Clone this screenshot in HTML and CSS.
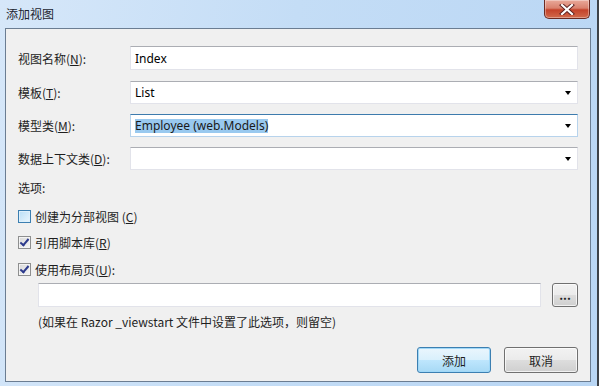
FILE: index.html
```html
<!DOCTYPE html>
<html lang="zh-CN">
<head>
  <meta charset="UTF-8" />
  <meta name="viewport" content="width=device-width, initial-scale=1.0"/>
  <title>添加视图</title>
  <link rel="stylesheet" href="styles.css">
</head>
<body>
  <div class="window">
    <div class="title-bar">
      <span class="title">添加视图</span>
      <button class="close-btn" aria-label="关闭">
        <svg width="16" height="11" viewBox="0 0 16 11">
          <path d="M3 1 L13 10 M13 1 L3 10" stroke="#5a2020" stroke-width="4" stroke-linecap="square"/>
          <path d="M3 1 L13 10 M13 1 L3 10" stroke="#ffffff" stroke-width="2.2" stroke-linecap="square"/>
        </svg>
      </button>
    </div>

    <div class="panel">
      <div class="field-row first">
        <label class="field-label">视图名称(<u>N</u>):</label>
        <div class="textbox">Index</div>
      </div>
      <div class="field-row">
        <label class="field-label">模板(<u>T</u>):</label>
        <div class="textbox combo">List<span class="arrow"></span></div>
      </div>
      <div class="field-row">
        <label class="field-label">模型类(<u>M</u>):</label>
        <div class="textbox combo focused"><span class="selected">Employee (web.Models)</span><span class="arrow"></span></div>
      </div>
      <div class="field-row">
        <label class="field-label">数据上下文类(<u>D</u>):</label>
        <div class="textbox combo"><span class="arrow"></span></div>
      </div>

      <div class="section-label">选项:</div>

      <div class="check-row first">
        <span class="checkbox hover"></span>
        <span>创建为分部视图 (<u>C</u>)</span>
      </div>
      <div class="check-row">
        <span class="checkbox checked"></span>
        <span>引用脚本库(<u>R</u>)</span>
      </div>
      <div class="check-row">
        <span class="checkbox checked"></span>
        <span>使用布局页(<u>U</u>):</span>
      </div>

      <div class="layout-row">
        <div class="textbox layout-input"></div>
        <button class="btn browse-btn">...</button>
      </div>
      <div class="hint">(如果在 Razor _viewstart 文件中设置了此选项，则留空)</div>

      <div class="actions">
        <button class="btn default-btn">添加</button>
        <button class="btn">取消</button>
      </div>
    </div>
  </div>
</body>
</html>
```

FILE: styles.css
```css
* {
  box-sizing: border-box;
  margin: 0;
  padding: 0;
}

body {
  width: 599px;
  height: 386px;
  overflow: hidden;
  font-family: "Segoe UI", "Noto Sans", "Noto Sans CJK SC", sans-serif;
  font-size: 12px;
  color: #1e1e1e;
}

u {
  text-decoration: underline;
  text-underline-offset: 1px;
}

.window {
  width: 599px;
  height: 386px;
  background: linear-gradient(100deg, #d6e7f9 0%, #c4ddf6 45%, #b9d6f4 100%);
  border-right: 2px solid #3d4248;
  display: flex;
  flex-direction: column;
}

.title-bar {
  height: 28px;
  display: flex;
  justify-content: space-between;
  align-items: flex-start;
  padding-left: 6px;
}

.title {
  font-family: "Noto Sans CJK SC", sans-serif;
  font-size: 12px;
  line-height: 28px;
  color: #1c2530;
}

.close-btn {
  width: 46px;
  height: 19px;
  margin-right: 7px;
  border: 1px solid #6b2a22;
  border-top: none;
  border-radius: 0 0 5px 5px;
  background: linear-gradient(#e9a99a 0%, #d9816e 45%, #c4422a 55%, #d16a4c 100%);
  display: flex;
  align-items: center;
  justify-content: center;
  box-shadow: inset 0 0 0 1px rgba(255,255,255,0.35);
}

.panel {
  flex: 1;
  margin: 0 6px 4px 5px;
  background-color: #f0f0f0;
  border: 1px solid #6b7d92;
  padding: 17px 12px 0 12px;
  display: flex;
  flex-direction: column;
  font-family: "Noto Sans CJK SC", sans-serif;
}

.field-row {
  display: flex;
  align-items: center;
  height: 23px;
  margin-top: 10px;
}

.field-row.first {
  height: 24px;
  margin-top: 0;
  margin-bottom: 1px;
}

.field-label {
  width: 112px;
}

.textbox {
  flex: 1;
  height: 100%;
  background-color: #fff;
  border: 1px solid #e2e3ea;
  border-top-color: #abadb3;
  padding-left: 4px;
  display: flex;
  align-items: center;
  font-family: "Segoe UI", "Noto Sans", sans-serif;
  font-size: 12px;
  color: #000;
}

.combo {
  position: relative;
}

.combo.focused {
  border-color: #b7d3ec;
  border-top-color: #3d7bad;
}

.selected {
  background-color: #99c9ef;
  color: #1a1a1a;
  line-height: 14px;
}

.arrow {
  position: absolute;
  right: 6px;
  top: 50%;
  margin-top: -2px;
  border-left: 3px solid transparent;
  border-right: 3px solid transparent;
  border-top: 4px solid #000;
}

.section-label {
  margin-top: 10px;
  height: 16px;
  line-height: 16px;
}

.check-row {
  display: flex;
  align-items: center;
  gap: 4px;
  height: 16px;
  margin-top: 10px;
}

.check-row.first {
  margin-top: 12px;
}

.check-row + .check-row + .check-row {
  margin-top: 11px;
}

.checkbox {
  width: 13px;
  height: 13px;
  border: 1px solid #8e8f8f;
  background: linear-gradient(135deg, #d8d8d8, #f6f6f6);
  box-shadow: inset 0 0 0 1px #f4f4f4;
  position: relative;
}

.checkbox.hover {
  border-color: #3c7fb1;
  background: linear-gradient(135deg, #b9dff7, #eaf6fd);
  box-shadow: inset 0 0 0 1px #def0fb;
}

.checkbox.checked::after {
  content: "";
  position: absolute;
  left: 3px;
  top: 0px;
  width: 3px;
  height: 7px;
  border-right: 2px solid #2c3a8c;
  border-bottom: 2px solid #2c3a8c;
  transform: rotate(40deg);
}

.layout-row {
  display: flex;
  align-items: center;
  gap: 11px;
  height: 24px;
  margin-top: 6px;
  padding-left: 20px;
}

.layout-input {
  flex: 1;
}

.btn {
  font-family: "Noto Sans CJK SC", sans-serif;
  font-size: 12px;
  color: #1e1e1e;
  border: 1px solid #707070;
  border-radius: 3px;
  background: linear-gradient(#f2f2f2 0%, #ebebeb 49%, #dddddd 51%, #cfcfcf 100%);
  box-shadow: inset 0 0 0 1px rgba(255,255,255,0.7);
  cursor: pointer;
}

.browse-btn {
  width: 26px;
  height: 24px;
  line-height: 10px;
  font-weight: bold;
}

.hint {
  margin-top: 7px;
  padding-left: 20px;
  height: 16px;
  line-height: 16px;
}

.actions {
  display: flex;
  justify-content: flex-end;
  gap: 13px;
  margin-top: 17px;
}

.actions .btn {
  width: 74px;
  height: 26px;
}

.default-btn {
  border-color: #3c7fb1;
  background: linear-gradient(#eaf6fd 0%, #d9f0fc 49%, #bee6fd 51%, #a7d9f5 100%);
  box-shadow: inset 0 0 0 1px #a0d8f8;
}
```
